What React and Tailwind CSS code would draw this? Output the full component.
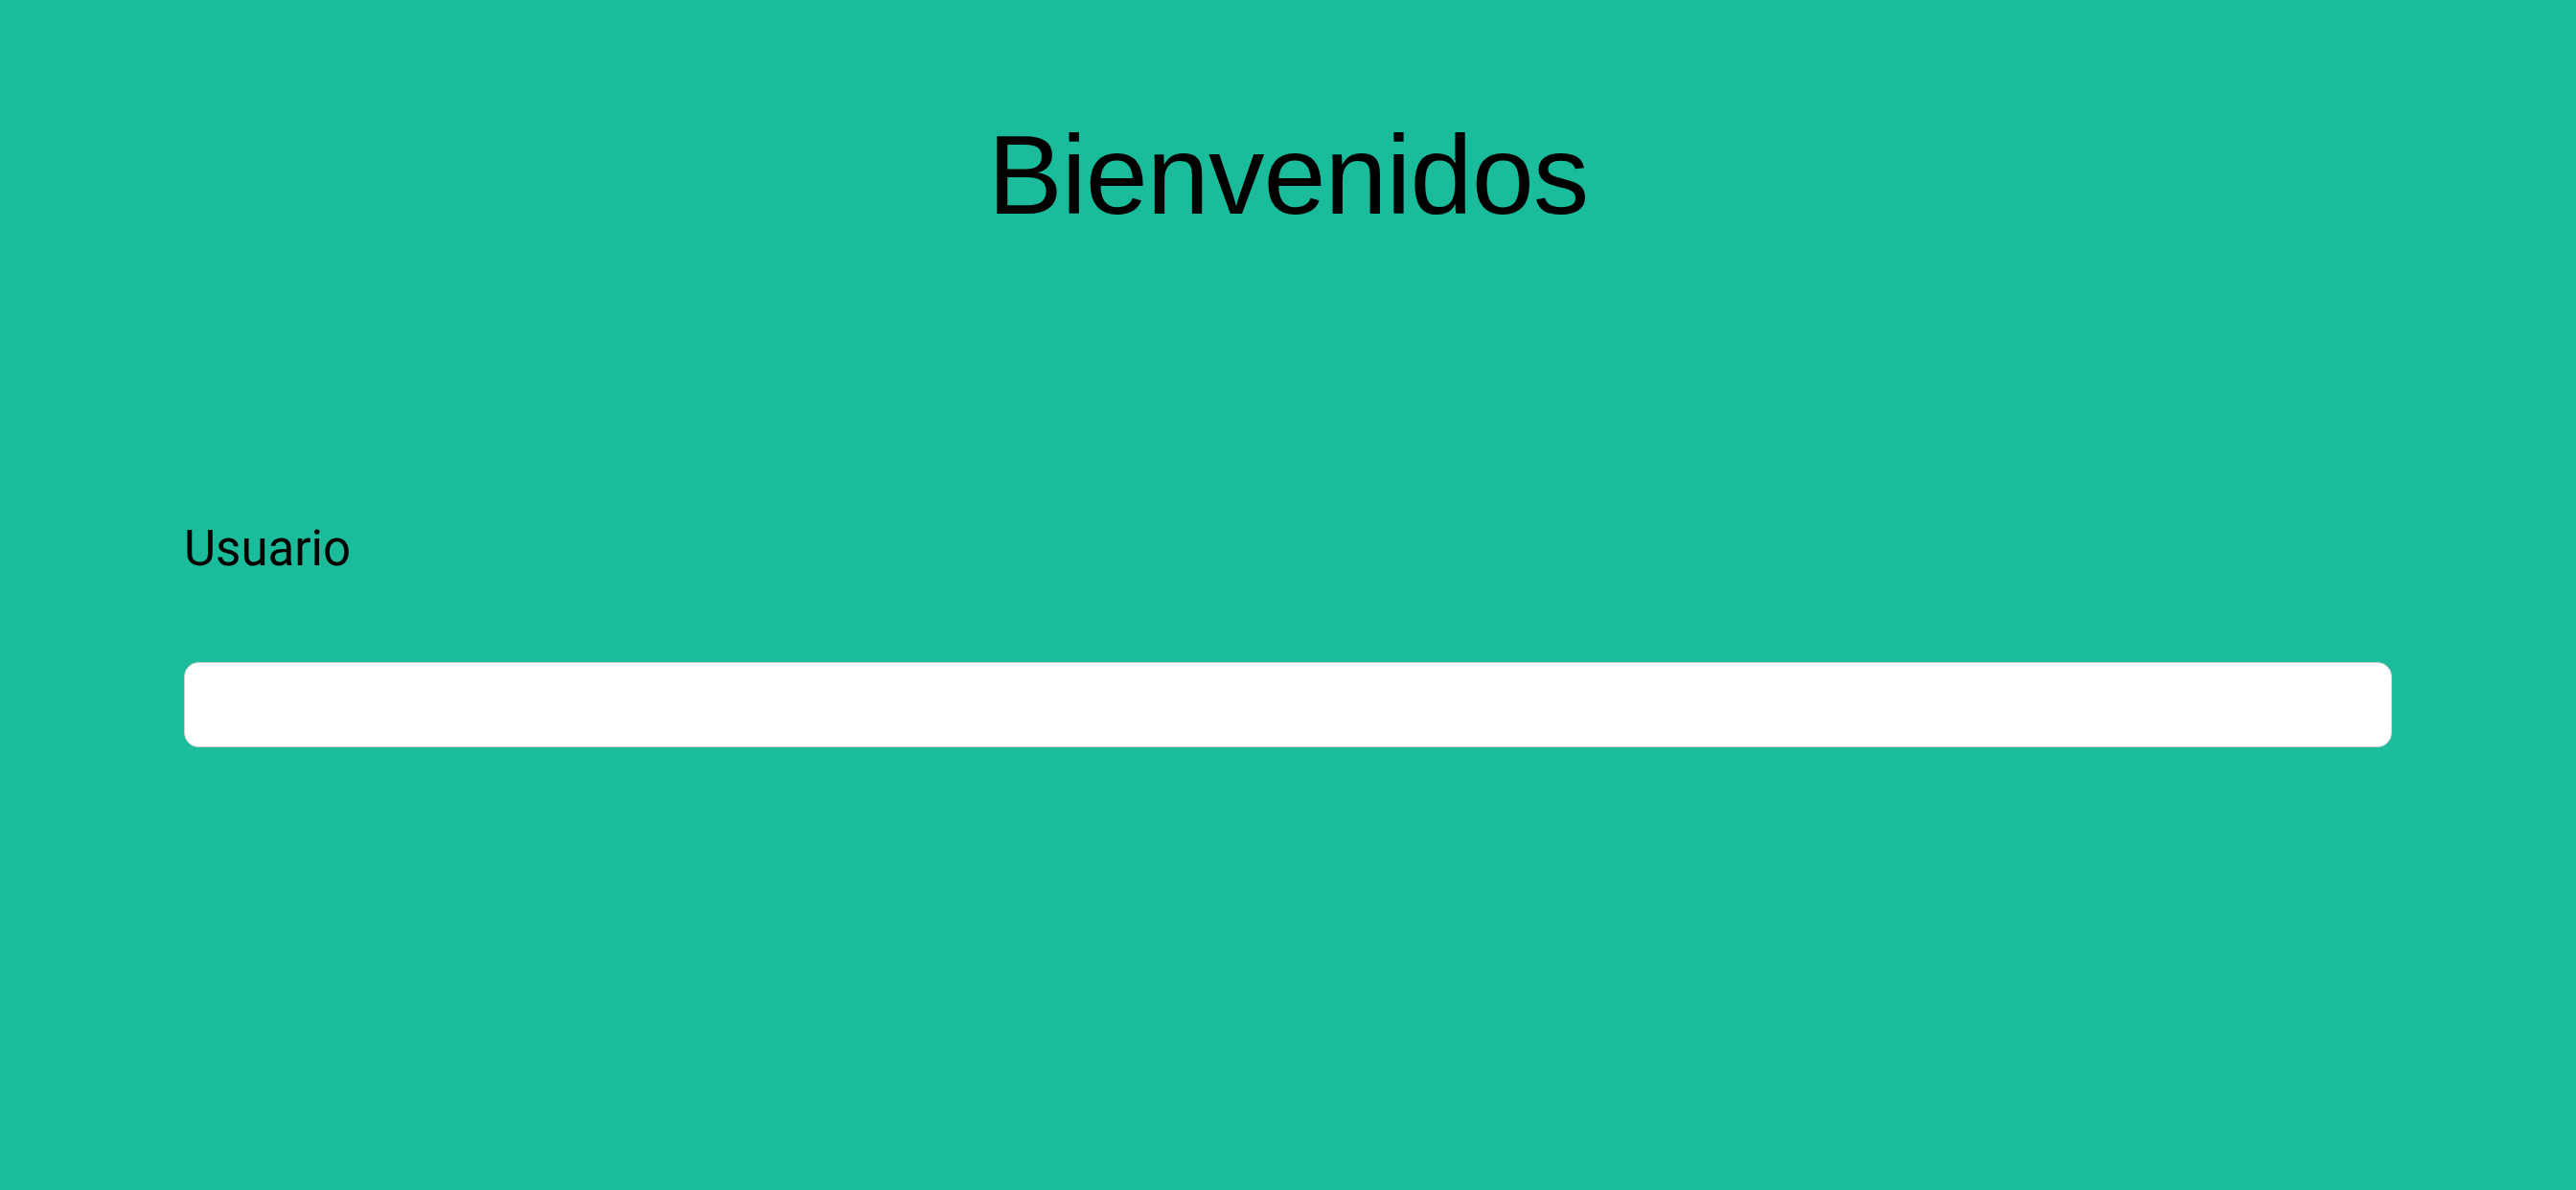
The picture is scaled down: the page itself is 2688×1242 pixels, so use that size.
import React from "react";

const App = () => {
    return (
        <div className="min-h-[1242px] w-full bg-[#1abc9c] flex flex-col px-[192px]">
            {/* Title */}
            <h1 className="mt-[124px] text-center text-[117px] leading-none tracking-[-1px] text-black font-['Liberation_Sans',Arial,sans-serif]">
                Bienvenidos
            </h1>

            {/* Usuario field */}
            <label className="mt-[306px] text-[51px] leading-none text-black font-['Roboto',sans-serif]">
                Usuario
            </label>
            <input
                type="text"
                className="mt-[93px] w-full h-[89px] bg-white rounded-[15px] border border-[#cfcfcf] outline-none px-6 text-[48px] font-['Roboto',sans-serif]"
            />
        </div>
    );
};

export default App;
